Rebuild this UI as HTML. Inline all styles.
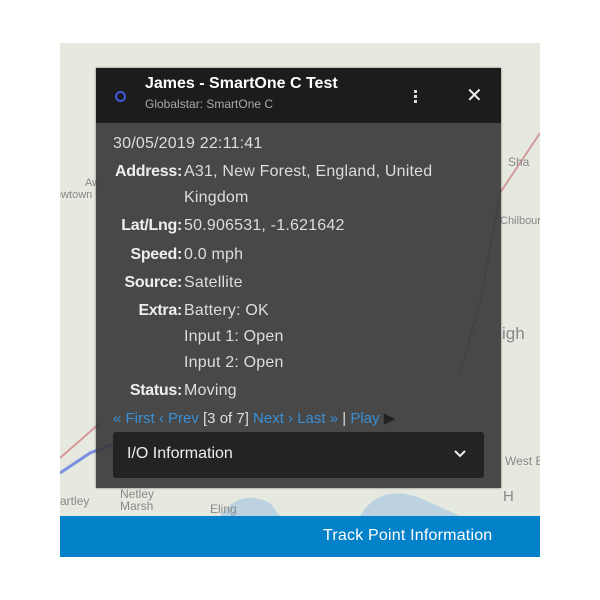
<!DOCTYPE html>
<html><head><style>
body{margin:0;width:600px;height:600px;background:#fff;position:relative;overflow:hidden;font-family:"Liberation Sans",sans-serif}
.map{position:absolute;left:60px;top:43px;width:480px;height:473px;background:#e6e9df;overflow:hidden}
.bar{position:absolute;left:60px;top:516px;width:480px;height:41px;background:#0381c9;color:#fff;font-size:16px}
.bar span{position:absolute;left:263px;top:11px;letter-spacing:.2px}
.pop{position:absolute;left:96px;top:68px;width:405px;height:420px;background:rgba(58,58,58,0.92);box-shadow:0 0 2px rgba(0,0,0,.5)}
.hd{position:absolute;left:0;top:0;width:405px;height:55px;background:#1c1c1c}
.t1{position:absolute;left:49px;top:7px;color:#fff;font-weight:bold;font-size:16px}
.t2{position:absolute;left:49px;top:29px;color:#aaa;font-size:12px}
.row{position:absolute;left:0;color:#ddd;font-size:16px;letter-spacing:.2px;white-space:nowrap}
.lb{position:absolute;right:319px;font-weight:bold;color:#eee;text-align:right;letter-spacing:-.3px}
.v{position:absolute;left:88px}
.io{position:absolute;left:17px;top:364px;width:371px;height:46px;background:#232323;border-radius:3px;color:#eee;font-size:16px}
a{color:#3a8fd6}
</style></head><body>
<div class="map">
<svg width="480" height="473" style="position:absolute;left:0;top:0">
<path d="M480 90 L440 150 L420 260 L400 330" stroke="#d49a9a" stroke-width="2" fill="none"/>
<path d="M0 430 L30 410 L70 395" stroke="#7b8fe0" stroke-width="3" fill="none"/>
<path d="M0 415 L40 380" stroke="#d49a9a" stroke-width="2" fill="none"/>
<path d="M300 473 Q320 440 360 455 L400 473" fill="#bcd2e0"/>
<path d="M160 473 Q180 445 210 460 L220 473" fill="#bcd2e0"/>
<text x="-5" y="155" fill="#888" font-size="11">ewtown</text>
<text x="25" y="143" fill="#888" font-size="11">Aw</text>
<text x="448" y="123" fill="#888" font-size="12">Sha</text>
<text x="440" y="181" fill="#888" font-size="11">Chilbourne</text>
<text x="445" y="422" fill="#888" font-size="12">West En</text>
<text x="0" y="462" fill="#888" font-size="12">artley</text>
<text x="60" y="455" fill="#888" font-size="12">Netley</text>
<text x="60" y="467" fill="#888" font-size="12">Marsh</text>
<text x="150" y="470" fill="#888" font-size="12">Eling</text>
<text x="443" y="458" fill="#888" font-size="15">H</text>
<text x="442" y="296" fill="#888" font-size="17">igh</text>
</svg>
</div>
<div class="pop">
<div class="hd">
<div style="position:absolute;left:19px;top:23px;width:7px;height:7px;border:2.5px solid #3d5ad8;border-radius:50%"></div>
<div class="t1">James - SmartOne C Test</div>
<div class="t2">Globalstar: SmartOne C</div>
<div style="position:absolute;left:318px;top:22px;width:3px;height:3px;background:#ddd;box-shadow:0 5px #ddd,0 10px #ddd"></div>
<div style="position:absolute;left:370px;top:15px;color:#eee;font-size:20px">✕</div>
</div>
<div class="row" style="top:67px;left:17px">30/05/2019 22:11:41</div>
<div class="row" style="top:95px;width:405px"><span class="lb">Address:</span><span class="v">A31, New Forest, England, United</span></div>
<div class="row" style="top:121px;width:405px"><span class="v">Kingdom</span></div>
<div class="row" style="top:149px;width:405px"><span class="lb">Lat/Lng:</span><span class="v">50.906531, -1.621642</span></div>
<div class="row" style="top:178px;width:405px"><span class="lb">Speed:</span><span class="v">0.0 mph</span></div>
<div class="row" style="top:206px;width:405px"><span class="lb">Source:</span><span class="v">Satellite</span></div>
<div class="row" style="top:234px;width:405px"><span class="lb">Extra:</span><span class="v">Battery: OK</span></div>
<div class="row" style="top:260px;width:405px"><span class="v">Input 1: Open</span></div>
<div class="row" style="top:286px;width:405px"><span class="v">Input 2: Open</span></div>
<div class="row" style="top:314px;width:405px"><span class="lb">Status:</span><span class="v">Moving</span></div>
<div class="row" style="top:341px;left:17px;font-size:15px;letter-spacing:0"><a>« First ‹ Prev</a> [3 of 7] <a>Next › Last »</a> | <a>Play</a> <span style="color:#222">▶</span></div>
<div class="io"><span style="position:absolute;left:14px;top:13px">I/O Information</span>
<svg style="position:absolute;left:341px;top:18px" width="12" height="8"><path d="M1 1 L6 6 L11 1" stroke="#eee" stroke-width="2" fill="none"/></svg></div>
</div>
<div class="bar"><span>Track Point Information</span></div>
</body></html>
